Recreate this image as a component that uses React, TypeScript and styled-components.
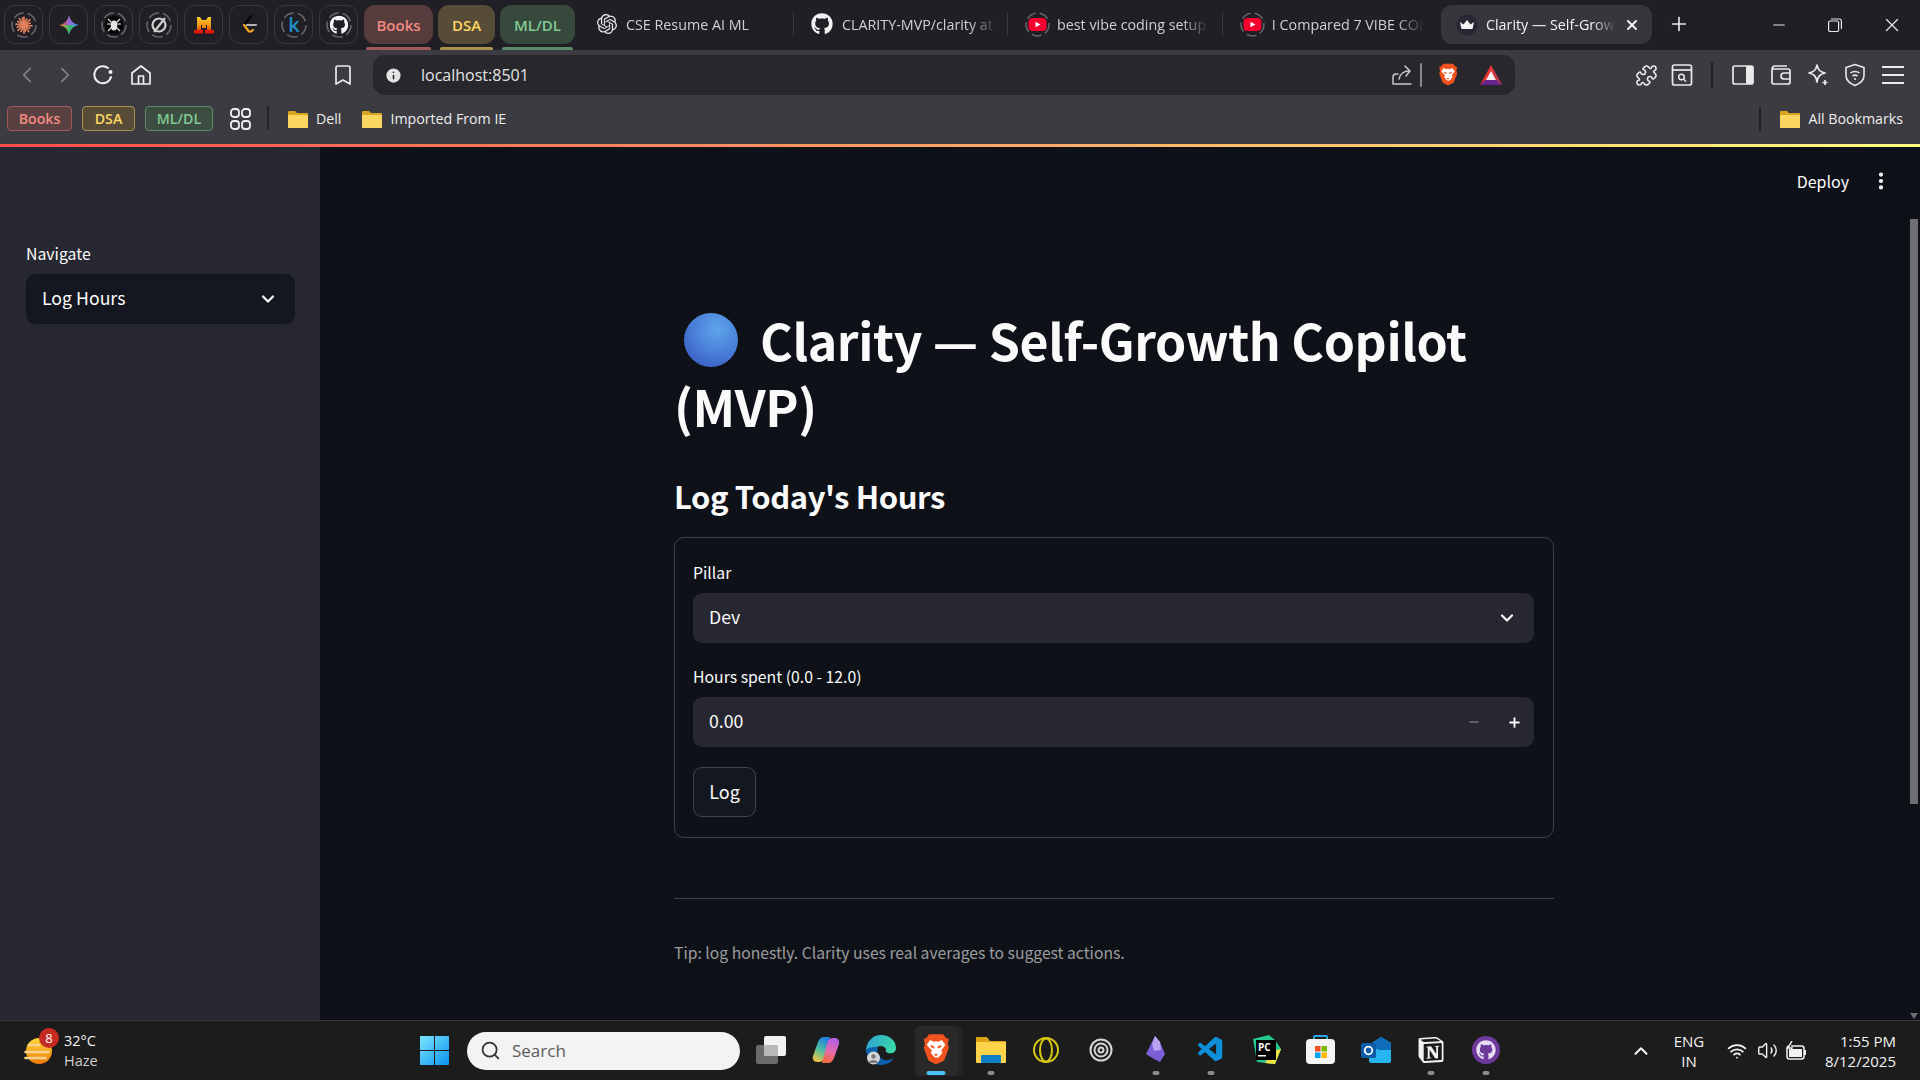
import styled, { createGlobalStyle } from "styled-components";
import { FaGithub } from "react-icons/fa";
import { SiNotion, SiOpenai } from "react-icons/si";
import { VscVscode } from "react-icons/vsc";
import {
  Bookmark,
  ChevronDown,
  ChevronLeft,
  ChevronRight,
  ChevronUp,
  Info,
  Minus,
  MoreVertical,
  Plus,
  Puzzle,
  Search,
  Volume2,
  Wifi,
  X,
} from "lucide-react";
import { ReactNode } from "react";

const GlobalStyle = createGlobalStyle`
  html, body {
    margin: 0;
    padding: 0;
    background: #0e1117;
    overflow: hidden;
  }
  * {
    box-sizing: border-box;
  }
`;

const chromeFont = `"Open Sans", "Noto Sans", sans-serif`;
const appFont = `"Noto Sans CJK SC", "Noto Sans", sans-serif`;

const Screen = styled.div`
  width: 1920px;
  height: 1080px;
  display: flex;
  flex-direction: column;
  overflow: hidden;
  font-family: ${chromeFont};
`;

/* browser tabs */
const TabStrip = styled.div`
  height: 50px;
  flex: none;
  display: flex;
  align-items: flex-start;
  padding: 5px 0 0 4px;
  background: #1f1f25;
  color: #d0d0d2;
`;

const PinnedTab = styled.div`
  width: 39px;
  height: 39px;
  margin-right: 6px;
  display: flex;
  align-items: center;
  justify-content: center;
  border: 1px solid #37373d;
  border-radius: 11px;
`;

const GroupTab = styled.div<{ $w: number; $bg: string; $fg: string; $bar: string }>`
  position: relative;
  width: ${(p) => p.$w}px;
  height: 39px;
  margin-right: 5px;
  display: flex;
  align-items: center;
  justify-content: center;
  border-radius: 11px;
  background: ${(p) => p.$bg};
  color: ${(p) => p.$fg};
  font-size: 15px;
  font-weight: 600;
  &::after {
    content: "";
    position: absolute;
    left: 2px;
    right: 2px;
    bottom: -6px;
    height: 3px;
    border-radius: 2px 2px 0 0;
    background: ${(p) => p.$bar};
  }
`;

const Tab = styled.div<{ $w: number; $gap?: number; $divider?: boolean }>`
  width: ${(p) => p.$w}px;
  height: 24px;
  margin-top: 7px;
  flex: none;
  display: flex;
  align-items: center;
  gap: ${(p) => p.$gap ?? 9}px;
  padding-left: 17px;
  border-right: ${(p) => (p.$divider ? "1px solid #3a3a40" : "none")};
`;

const TabTitle = styled.span<{ $w: number }>`
  width: ${(p) => p.$w}px;
  font-size: 14.3px;
  white-space: nowrap;
  overflow: hidden;
  -webkit-mask-image: linear-gradient(to right, #000 82%, transparent);
  mask-image: linear-gradient(to right, #000 82%, transparent);
`;

const ActiveTab = styled.div`
  width: 211px;
  height: 39px;
  margin-left: 17px;
  flex: none;
  display: flex;
  align-items: center;
  gap: 8px;
  padding-left: 15px;
  border-radius: 11px;
  background: #36363c;
  color: #f2f2f2;
`;

const WindowButtons = styled.div`
  margin-left: auto;
  height: 39px;
  display: flex;
  align-items: center;
  color: #e8e8e8;
`;

const WindowButton = styled.div<{ $w?: number }>`
  width: ${(p) => p.$w ?? 56}px;
  display: flex;
  justify-content: center;
`;

const NewTab = styled(WindowButton)`
  margin-top: 8px;
`;

/* toolbar */
const Toolbar = styled.div`
  height: 45px;
  flex: none;
  display: flex;
  align-items: flex-start;
  padding: 5px 0 0 8px;
  background: #3b3b41;
  color: #eaeaea;
`;

const ToolSlot = styled.div<{ $w?: number; $dim?: boolean; $ml?: number }>`
  width: ${(p) => p.$w ?? 38}px;
  height: 40px;
  margin-left: ${(p) => p.$ml ?? 0}px;
  flex: none;
  display: flex;
  align-items: center;
  justify-content: center;
  color: ${(p) => (p.$dim ? "#8a8a8e" : "inherit")};
`;

const Omnibox = styled.div`
  width: 1142px;
  height: 40px;
  margin-left: 11px;
  flex: none;
  display: flex;
  align-items: center;
  padding-left: 11px;
  border-radius: 12px;
  background: #27272c;
`;

const Url = styled.span`
  margin-left: 18px;
  font-size: 16px;
  color: #e4e4e4;
`;

const OmniEnd = styled.div`
  margin-left: auto;
  display: flex;
  align-items: center;
  color: #c9c9c9;
`;

const BarDivider = styled.div<{ $h?: number; $color?: string; $mr?: number }>`
  width: 2px;
  height: ${(p) => p.$h ?? 24}px;
  margin-right: ${(p) => p.$mr ?? 0}px;
  flex: none;
  border-radius: 1px;
  background: ${(p) => p.$color ?? "#222227"};
`;

/* bookmarks */
const BookmarkBar = styled.div`
  height: 49px;
  flex: none;
  display: flex;
  align-items: flex-start;
  padding: 11px 17px 0 7px;
  background: #3b3b41;
  color: #eeeeee;
  font-size: 14.2px;
`;

const Chip = styled.div<{ $w: number; $bg: string; $fg: string; $line: string }>`
  width: ${(p) => p.$w}px;
  height: 25px;
  margin-right: 10px;
  flex: none;
  display: flex;
  align-items: center;
  justify-content: center;
  border: 1px solid ${(p) => p.$line};
  border-radius: 4px;
  background: ${(p) => p.$bg};
  color: ${(p) => p.$fg};
  font-weight: 600;
`;

const BookmarkItem = styled.div<{ $gap?: number }>`
  height: 25px;
  display: flex;
  align-items: center;
  gap: 8px;
  margin-left: ${(p) => p.$gap ?? 0}px;
  white-space: nowrap;
`;

const BookmarkEnd = styled(BookmarkItem)`
  margin-left: auto;
`;

const GridSlot = styled.div`
  width: 34px;
  height: 25px;
  display: flex;
  align-items: center;
  justify-content: center;
  margin-right: 10px;
`;

const GradientLine = styled.div`
  height: 3px;
  flex: none;
  background: linear-gradient(to right, #ff4b4b, #fffd80);
`;

/* streamlit page */
const Page = styled.div`
  flex: 1;
  min-height: 0;
  display: flex;
  background: #0e1117;
  color: #fafafa;
  font-family: ${appFont};
`;

const Sidebar = styled.aside`
  width: 320px;
  flex: none;
  padding: 96px 25px 0 26px;
  background: #262730;
`;

const FieldLabel = styled.div`
  height: 22px;
  line-height: 22px;
  margin-bottom: 9px;
  font-size: 15.8px;
`;

const SelectBox = styled.div<{ $bg: string }>`
  height: 50px;
  display: flex;
  align-items: center;
  justify-content: space-between;
  padding: 0 17px 4px 16px;
  border-radius: 9px;
  background: ${(p) => p.$bg};
  font-size: 17.7px;
  svg {
    margin-top: 4px;
  }
`;

const Main = styled.main`
  position: relative;
  flex: 1;
  min-width: 0;
`;

const Header = styled.div`
  position: absolute;
  top: 22px;
  right: 28px;
  display: flex;
  align-items: center;
  gap: 21px;
  font-size: 16px;
`;

const Scrollbar = styled.div`
  position: absolute;
  top: 72px;
  right: 2px;
  width: 8px;
  height: 585px;
  background: #6f6f72;
`;

const ScrollArrow = styled.div`
  position: absolute;
  bottom: 1px;
  right: 2px;
  width: 0;
  height: 0;
  border-left: 4px solid transparent;
  border-right: 4px solid transparent;
  border-top: 6px solid #6f6f72;
`;

const Content = styled.div`
  width: 880px;
  margin-left: 354px;
  padding-top: 159px;
`;

const Title = styled.h1`
  margin: 0;
  font-size: 50px;
  line-height: 66px;
  letter-spacing: -0.42px;
  font-weight: 700;
`;

const Orb = styled.span`
  display: inline-block;
  width: 54px;
  height: 54px;
  margin: 0 22px 0 10px;
  vertical-align: -6px;
  border-radius: 50%;
  background: radial-gradient(circle at 62% 30%, #5fa5ea 0%, #4a82d9 45%, #3d63c9 78%, #5a57c4 100%);
`;

const Subtitle = styled.h2`
  margin: 36px 0 0;
  font-size: 31px;
  line-height: 44px;
  letter-spacing: -0.4px;
  font-weight: 600;
`;

const FormCard = styled.form`
  height: 301px;
  margin-top: 19px;
  padding: 24px 19px 0 18px;
  border: 1px solid rgba(250, 250, 250, 0.2);
  border-radius: 10px;
`;

const NumberBox = styled(SelectBox)`
  padding-right: 0;
`;

const Stepper = styled.div`
  display: flex;
  align-items: center;
`;

const StepSlot = styled.div<{ $dim?: boolean }>`
  width: 40px;
  display: flex;
  justify-content: center;
  color: ${(p) => (p.$dim ? "#6f7078" : "#fafafa")};
`;

const Field = styled.div<{ $mb?: number }>`
  margin-bottom: ${(p) => p.$mb ?? 24}px;
`;

const SubmitButton = styled.button`
  width: 63px;
  height: 50px;
  padding: 0 0 3px;
  border: 1px solid rgba(250, 250, 250, 0.2);
  border-radius: 9px;
  background: #13171f;
  color: #fafafa;
  font-family: inherit;
  font-size: 18px;
`;

const Rule = styled.hr`
  height: 1px;
  margin: 60px 0 0;
  border: 0;
  background: rgba(250, 250, 250, 0.2);
`;

const Tip = styled.p`
  margin: 42px 0 0;
  font-size: 15.7px;
  line-height: 24px;
  color: rgba(250, 250, 250, 0.6);
`;

/* windows taskbar */
const Taskbar = styled.footer`
  position: relative;
  height: 60px;
  flex: none;
  display: flex;
  align-items: center;
  border-top: 1px solid #3a3a3a;
  background: #1c1c1c;
  color: #f2f2f2;
  font-family: ${chromeFont};
`;

const Weather = styled.div`
  position: relative;
  width: 420px;
  height: 100%;
  flex: none;
  display: flex;
  align-items: center;
  gap: 12px;
  padding-left: 24px;
`;

const WeatherBadge = styled.span`
  position: absolute;
  left: 39px;
  top: 7px;
  width: 20px;
  height: 20px;
  display: flex;
  align-items: center;
  justify-content: center;
  border-radius: 50%;
  background: #c42b22;
  color: #fff;
  font-size: 13px;
`;

const WeatherText = styled.div`
  font-size: 14.5px;
  line-height: 20px;
  div + div {
    color: #cfcfcf;
  }
`;

const SearchPill = styled.div`
  width: 273px;
  height: 38px;
  margin-left: 18px;
  flex: none;
  display: flex;
  align-items: center;
  gap: 11px;
  padding-left: 13px;
  border-radius: 19px;
  background: #f3f3f3;
  color: #5c5c5c;
  font-size: 17px;
`;

const AppIcons = styled.div`
  margin-left: 3px;
  display: flex;
`;

const AppSlot = styled.div<{ $dot?: boolean; $active?: boolean }>`
  position: relative;
  width: 55px;
  height: 50px;
  display: flex;
  align-items: center;
  justify-content: center;
  &::before {
    content: ${(p) => (p.$active ? '""' : "none")};
    position: absolute;
    inset: 0 5px 0 7px;
    border-radius: 5px;
    background: #292929;
    box-shadow: 5px 0 0 #242424;
  }
  &::after {
    content: ${(p) => (p.$dot || p.$active ? '""' : "none")};
    position: absolute;
    bottom: 1px;
    left: 50%;
    width: ${(p) => (p.$active ? 19 : 7)}px;
    height: 4px;
    transform: translateX(-50%);
    border-radius: 2px;
    background: ${(p) => (p.$active ? "#4cc2ff" : "#8c8c8c")};
  }
  > * {
    position: relative;
    margin-bottom: 2px;
  }
`;

const Tray = styled.div`
  margin-left: auto;
  display: flex;
  align-items: center;
  padding-right: 24px;
  font-size: 15px;
  line-height: 20px;
`;

const TraySlot = styled.div<{ $w: number }>`
  width: ${(p) => p.$w}px;
  display: flex;
  justify-content: center;
  text-align: center;
`;

const Clock = styled.div`
  width: 76px;
  margin-left: 8px;
  text-align: right;
  white-space: nowrap;
`;

/* drawn icons */
const Ring = ({ children }: { children: ReactNode }) => (
  <svg width="26" height="26" viewBox="0 0 26 26">
    <circle cx="13" cy="13" r="12" fill="none" stroke="#66666a" strokeWidth="1.6" strokeDasharray="11 4" />
    {children}
  </svg>
);

const Burst = () => (
  <Ring>
    <g stroke="#e0805c" strokeWidth="1.7" strokeLinecap="round">
      {[0, 24, 48, 72, 96, 120, 144, 168].map((a, i) => (
        <line key={a} x1="13" y1={i % 2 ? 6.5 : 5} x2="13" y2={i % 2 ? 20 : 21} transform={`rotate(${a} 13 13)`} />
      ))}
    </g>
  </Ring>
);

const GeminiStar = () => (
  <svg width="20" height="20" viewBox="0 0 20 20">
    <defs>
      <clipPath id="gemClip">
        <path d="M10 0c1 5 4 9 10 10-6 1-9 5-10 10-1-5-4-9-10-10 6-1 9-5 10-10z" />
      </clipPath>
      <linearGradient id="gemTop" x1="0" y1="0" x2="1" y2="0">
        <stop offset="0" stopColor="#e8453a" />
        <stop offset="0.5" stopColor="#9a6ad0" />
        <stop offset="1" stopColor="#3f8af2" />
      </linearGradient>
      <linearGradient id="gemBottom" x1="0" y1="0" x2="1" y2="0">
        <stop offset="0" stopColor="#f6a51c" />
        <stop offset="0.5" stopColor="#3fb56a" />
        <stop offset="1" stopColor="#2f9be0" />
      </linearGradient>
    </defs>
    <g clipPath="url(#gemClip)">
      <rect width="20" height="10" fill="url(#gemTop)" />
      <rect y="10" width="20" height="10" fill="url(#gemBottom)" />
    </g>
  </svg>
);

const BugIcon = () => (
  <Ring>
    <circle cx="13" cy="13" r="9.5" fill="#060606" />
    <g stroke="#e4e4e4" strokeWidth="1.2" fill="none">
      <ellipse cx="13" cy="13.5" rx="2.6" ry="4.5" fill="#e4e4e4" />
      <path d="M7 7l3.500 3.500M19 7l-3.500 3.500M6 12h4.500M20 12h-4.500M7 19l3.500-3.500M19 19l-3.500-3.500" />
    </g>
  </Ring>
);

const SlashIcon = () => (
  <Ring>
    <circle cx="13" cy="13" r="6.5" fill="none" stroke="#cfcfcf" strokeWidth="2.2" />
    <line x1="8" y1="20" x2="19" y2="6" stroke="#cfcfcf" strokeWidth="2.2" />
  </Ring>
);

const MistralIcon = () => (
  <svg width="20" height="18" viewBox="0 0 20 18">
    <defs>
      <linearGradient id="mist" x1="0" y1="0" x2="0" y2="1">
        <stop offset="0" stopColor="#f8d12c" />
        <stop offset="0.7" stopColor="#f28a12" />
        <stop offset="1" stopColor="#e8500a" />
      </linearGradient>
    </defs>
    <path d="M3 1h3l2 3h4l2-3h3v13h-4v-5h-1v3H8V9H7v5H3z" fill="url(#mist)" />
    <rect x="0" y="14" width="9" height="3.500" fill="#e3170a" />
    <rect x="11" y="14" width="9" height="3.500" fill="#e3170a" />
  </svg>
);

const LeetIcon = () => (
  <svg width="26" height="26" viewBox="0 0 26 26" fill="none" strokeWidth="2.2" strokeLinecap="round">
    <path d="M15 4L8 13" stroke="#050505" />
    <path d="M8 13l4.500 6c1.500 1 3 .5 4.500-1" stroke="#f0a51c" />
    <path d="M11 13h9" stroke="#b4b4b4" />
  </svg>
);

const KIcon = () => (
  <Ring>
    <text x="13" y="20" textAnchor="middle" fontSize="20" fontWeight="600" fill="#1f8fc8" fontFamily="Open Sans, sans-serif">
      k
    </text>
  </Ring>
);

const GitHubRing = () => (
  <Ring>
    <g transform="translate(3.5 3.5)">
      <FaGithub size={19} color="#f4f4f4" />
    </g>
  </Ring>
);

const YouTubeRing = () => (
  <svg width="25" height="25" viewBox="0 0 25 25">
    <circle cx="12.500" cy="12.500" r="11.500" fill="none" stroke="#66666a" strokeWidth="1.500" strokeDasharray="10 4" />
    <rect x="3.500" y="6" width="18" height="13" rx="4" fill="#f5002f" />
    <path d="M10.500 9.800l5 2.700-5 2.700z" fill="#fff" />
  </svg>
);

const CrownIcon = () => (
  <svg width="22" height="22" viewBox="0 0 22 22">
    <circle cx="11" cy="11" r="10.5" fill="#262733" />
    <path d="M4 8l3.500 2.500L11 6l3.500 4.500L18 8l-1.500 7h-11z" fill="#f3f3f3" />
  </svg>
);

const ReloadIcon = () => (
  <svg width="24" height="24" viewBox="0 0 24 24" fill="none" stroke="#f0f0f0" strokeWidth="2">
    <path d="M20 14a8.500 8.500 0 1 1-3-9" strokeLinecap="round" />
    <circle cx="19.500" cy="9" r="2" fill="#f0f0f0" stroke="none" />
  </svg>
);

const HomeIcon = () => (
  <svg width="22" height="24" viewBox="0 0 22 24" fill="none" stroke="#f0f0f0" strokeWidth="1.700" strokeLinejoin="round">
    <path d="M2 10l9-7 9 7v11H2z" />
    <path d="M8.500 21v-8h5v8" />
  </svg>
);

const ShareIcon = () => (
  <svg width="22" height="22" viewBox="0 0 22 22" fill="none" stroke="#c9c9c9" strokeWidth="1.500" strokeLinejoin="round" strokeLinecap="round">
    <path d="M1 20V13a3 3 0 0 1 3-3h2M19 20H1M7 15c1-5 5-8 10-8M13 2l5 5-4 5" />
  </svg>
);

const BraveLion = ({ size }: { size: number }) => (
  <svg width={size} height={size * 1.17} viewBox="0 0 24 28">
    <path d="M6 1h12l2.500 3 2.500 1-1 4.500 1 3-4 11L12 27l-6.500-3.500-4-11 1-3L1.500 5 4 4z" fill="#f1531f" />
    <path d="M7 6l3 1.500 2-.5 2 .5 3-1.500 3 4-3.500 5 1 2-3.500 4h-3l-3.500-4 1-2L4 10z" fill="#fff" />
    <path d="M7.500 11l3 1.500M16.500 11l-3 1.500" stroke="#f1531f" strokeWidth="1.500" />
    <path d="M10 18h4l-2 1.800z" fill="#f1531f" />
  </svg>
);

const BatTriangle = () => (
  <svg width="24" height="22" viewBox="0 0 24 22">
    <path d="M12 1L1 21h22z" fill="#e5352e" />
    <path d="M1 21h22l-5-5H6z" fill="#66248c" />
    <path d="M12 7l-5 9h10z" fill="#f4f0f4" />
    <path d="M12 1l5 15 6 5z" fill="#b03a5b" opacity="0.6" />
  </svg>
);

const ReaderIcon = () => (
  <svg width="22" height="24" viewBox="0 0 22 24" fill="none" stroke="#eaeaea" strokeWidth="1.700">
    <rect x="1.500" y="2" width="19" height="20" rx="2" />
    <path d="M1.500 7h19" />
    <circle cx="10.500" cy="14" r="2.800" strokeWidth="1.500" />
    <path d="M12.500 16l2.500 2.500" strokeWidth="1.500" />
  </svg>
);

const SidePanelIcon = () => (
  <svg width="22" height="22" viewBox="0 0 22 22">
    <rect x="1" y="2" width="20" height="18" rx="2" fill="none" stroke="#eaeaea" strokeWidth="1.700" />
    <rect x="14" y="2" width="7" height="18" rx="1.500" fill="#eaeaea" />
  </svg>
);

const WalletIcon = () => (
  <svg width="22" height="22" viewBox="0 0 22 22" fill="none" stroke="#eaeaea" strokeWidth="1.700">
    <path d="M3 5h15a2 2 0 0 1 2 2v11a2 2 0 0 1-2 2H4a2 2 0 0 1-2-2V6c0-2 1-4 3-4h12" />
    <path d="M20 9h-6a2.500 2.500 0 0 0 0 6h6" />
  </svg>
);

const LeoIcon = () => (
  <svg width="24" height="24" viewBox="0 0 24 24" fill="none" stroke="#eaeaea" strokeWidth="1.700" strokeLinejoin="round">
    <path d="M11 2c1 5 3 7 8 8-5 1-7 3-8 9-1-6-3-8-8-9 5-1 7-3 8-8z" />
    <path d="M19 17v5M16.500 19.500h5" />
  </svg>
);

const VpnIcon = () => (
  <svg width="22" height="24" viewBox="0 0 22 24" fill="none" stroke="#eaeaea" strokeWidth="1.600">
    <path d="M11 1.500l9 3v8c0 5-4 8-9 10-5-2-9-5-9-10v-8z" />
    <path d="M6.500 10c2.500-2 6.500-2 9 0M8.500 13c1.500-1 3.500-1 5 0" />
    <circle cx="11" cy="16" r="1" fill="#eaeaea" stroke="none" />
  </svg>
);

const MenuIcon = () => (
  <svg width="22" height="20" viewBox="0 0 22 20" stroke="#eaeaea" strokeWidth="1.800">
    <path d="M0 2h22M0 10h22M0 18h22" />
  </svg>
);

const AppsGrid = () => (
  <svg width="21" height="22" viewBox="0 0 21 22" fill="none" stroke="#f0f0f0" strokeWidth="1.800">
    <rect x="1" y="1" width="8" height="8" rx="3" />
    <rect x="12" y="1" width="8" height="8" rx="3" />
    <rect x="1" y="13" width="8" height="8" rx="3" />
    <rect x="12" y="13" width="8" height="8" rx="3" />
  </svg>
);

const Folder = ({ size = 20 }: { size?: number }) => (
  <svg width={size} height={size * 0.9} viewBox="0 0 20 18">
    <path d="M0 2a1 1 0 0 1 1-1h6l2 2h10a1 1 0 0 1 1 1v13a1 1 0 0 1-1 1H1a1 1 0 0 1-1-1z" fill="#d9a520" />
    <path d="M0 5h20v12a1 1 0 0 1-1 1H1a1 1 0 0 1-1-1z" fill="#fad660" />
  </svg>
);

const HazeSun = () => (
  <svg width="28" height="28" viewBox="0 0 28 28">
    <defs>
      <linearGradient id="sun" x1="0" y1="0" x2="0" y2="1">
        <stop offset="0" stopColor="#fdd835" />
        <stop offset="1" stopColor="#ee7a0c" />
      </linearGradient>
    </defs>
    <circle cx="15" cy="14" r="13" fill="url(#sun)" />
    <g stroke="#f5d38a" strokeWidth="2.600" strokeLinecap="round">
      <path d="M5 8h10M1.500 15h23M1.500 21h20" />
    </g>
  </svg>
);

const WindowsLogo = () => (
  <svg width="29" height="29" viewBox="0 0 29 29">
    <defs>
      <linearGradient id="win" x1="0" y1="0" x2="1" y2="1">
        <stop offset="0" stopColor="#7be6ff" />
        <stop offset="1" stopColor="#0a92f0" />
      </linearGradient>
    </defs>
    <path d="M0 1a1 1 0 0 1 1-1h13v14H0zM15 0h13a1 1 0 0 1 1 1v13H15zM0 15h14v14H1a1 1 0 0 1-1-1zM15 15h14v13a1 1 0 0 1-1 1H15z" fill="url(#win)" />
  </svg>
);

const TaskViewIcon = () => (
  <svg width="30" height="28" viewBox="0 0 30 28">
    <rect x="0" y="9" width="22" height="19" rx="2" fill="#6a6a6a" />
    <rect x="8" y="0" width="22" height="20" rx="2" fill="#f2f2f2" />
    <rect x="8" y="9" width="14" height="11" rx="1" fill="#b8b8b8" />
  </svg>
);

const CopilotIcon = () => (
  <svg width="28" height="26" viewBox="0 0 28 26">
    <defs>
      <linearGradient id="copA" x1="0.600" y1="0" x2="0.200" y2="1">
        <stop offset="0" stopColor="#1f7fe0" />
        <stop offset="0.5" stopColor="#4fc0a0" />
        <stop offset="1" stopColor="#f7c33c" />
      </linearGradient>
      <linearGradient id="copB" x1="0.600" y1="0" x2="0.400" y2="1">
        <stop offset="0" stopColor="#b060e8" />
        <stop offset="0.55" stopColor="#e86aa8" />
        <stop offset="1" stopColor="#f26a3c" />
      </linearGradient>
    </defs>
    <path d="M12 0h6l-5 19c-.700 3-2 6-6 6H5C2 25 0 22 1 19L6 5C7 2 9 0 12 0z" fill="url(#copA)" />
    <path d="M16 26h-6l5-19c.700-3 2-6 6-6h2c3 0 5 3 4 6l-5 14c-1 3-3 5-6 5z" fill="url(#copB)" />
  </svg>
);

const EdgeIcon = () => (
  <svg width="30" height="30" viewBox="0 0 30 30">
    <defs>
      <linearGradient id="edge" x1="0" y1="0" x2="1" y2="0.300">
        <stop offset="0" stopColor="#2f9fd8" />
        <stop offset="1" stopColor="#38d6a8" />
      </linearGradient>
    </defs>
    <path d="M15 0c9 0 15 6 15 13 0 5-5 6-8 5-2-1-3-2-2-4-2-4-9-4-12 0-1 1-3 2-4 3-2 2-3 0-4 0C0 6 7 0 15 0z" fill="url(#edge)" />
    <path d="M0 15c1 8 7 15 15 15 7 0 11-4 13-7-5 3-11 3-14-1-3-3-3-7-2-10-5 0-9 0-12 3z" fill="#0c62ad" />
    <circle cx="7.500" cy="23" r="6.500" fill="#d4d4d4" />
    <circle cx="7.500" cy="21.500" r="2.200" fill="#7a7a7a" />
    <path d="M3 28c0-4 9-4 9 0z" fill="#7a7a7a" />
  </svg>
);

const FilesIcon = () => (
  <svg width="30" height="27" viewBox="0 0 30 27">
    <path d="M0 2a1 1 0 0 1 1-1h10l3 4h15a1 1 0 0 1 1 1v5H0z" fill="#dca214" />
    <path d="M0 6h30v20a1 1 0 0 1-1 1H1a1 1 0 0 1-1-1z" fill="#fdd34c" />
    <rect x="5" y="19" width="20" height="8" rx="1" fill="#0f7fc8" />
  </svg>
);

const OperaIcon = () => (
  <svg width="26" height="26" viewBox="0 0 26 26" fill="none" stroke="#d9c813" strokeWidth="2">
    <circle cx="13" cy="13" r="12" />
    <ellipse cx="13" cy="13" rx="6" ry="11.500" />
  </svg>
);

const OllamaRings = () => (
  <svg width="24" height="24" viewBox="0 0 24 24" fill="none" stroke="#d4d4d4" strokeWidth="2">
    <circle cx="12" cy="12" r="10.500" />
    <circle cx="12" cy="12" r="6.500" />
    <circle cx="12" cy="12" r="2.500" />
  </svg>
);

const ObsidianIcon = () => (
  <svg width="21" height="27" viewBox="0 0 21 27">
    <path d="M10 0l5 6 5 12-5 8-6-3-8-5 4-8z" fill="#7c5fd6" />
    <path d="M10 0l5 6 1 8-7 1-2-7z" fill="#b9a4f0" />
  </svg>
);

const PyCharmIcon = () => (
  <svg width="30" height="29" viewBox="0 0 30 29">
    <path d="M2 4l16-4 6 5 6 9-6 15-18-2z" fill="#25c98c" />
    <path d="M22 16l8-2-6 15-10-1z" fill="#f5e23c" />
    <rect x="5" y="5" width="20" height="20" fill="#000" />
    <text x="7" y="16" fontSize="10" fontWeight="700" fill="#fff" fontFamily="Open Sans, sans-serif">
      PC
    </text>
    <rect x="7" y="20" width="8" height="1.500" fill="#fff" />
  </svg>
);

const StoreIcon = () => (
  <svg width="29" height="29" viewBox="0 0 29 29">
    <path d="M8 5V2a1 1 0 0 1 1-1h11a1 1 0 0 1 1 1v3" fill="none" stroke="#2aa5e8" strokeWidth="2" />
    <rect x="0" y="4" width="29" height="25" rx="4" fill="#f4f4f4" />
    <rect x="9" y="11" width="5.500" height="5.500" fill="#f25022" />
    <rect x="15.500" y="11" width="5.500" height="5.500" fill="#7fba00" />
    <rect x="9" y="17.500" width="5.500" height="5.500" fill="#00a4ef" />
    <rect x="15.500" y="17.500" width="5.500" height="5.500" fill="#ffb900" />
  </svg>
);

const OutlookIcon = () => (
  <svg width="30" height="26" viewBox="0 0 30 26">
    <path d="M8 8L20 0l10 6v18a2 2 0 0 1-2 2H10a2 2 0 0 1-2-2z" fill="#25b4ee" />
    <path d="M20 0l10 6v7H18L8 8z" fill="#0f6cbd" />
    <rect x="0" y="6" width="15" height="15" rx="1.500" fill="#0a5ca8" />
    <circle cx="7.500" cy="13.500" r="3.800" fill="none" stroke="#fff" strokeWidth="1.800" />
  </svg>
);

const GithubDesktop = () => (
  <svg width="28" height="28" viewBox="0 0 28 28">
    <circle cx="14" cy="14" r="14" fill="#6d3a9c" />
    <g transform="translate(4 4)">
      <FaGithub size={20} color="#e8dcf2" />
    </g>
  </svg>
);

const BatteryIcon = () => (
  <svg width="22" height="20" viewBox="0 0 22 20" fill="none" stroke="#f2f2f2" strokeWidth="1.500">
    <rect x="1" y="5" width="17" height="13" rx="2.500" />
    <rect x="3" y="8" width="13" height="8" fill="#f2f2f2" stroke="none" />
    <path d="M19 9v5" strokeWidth="2" />
    <path d="M6 0L2 7h4L4 12" fill="#1c1c1c" />
  </svg>
);

const App = () => {
  return (
    <Screen>
      <GlobalStyle />
      <TabStrip>
        <PinnedTab><Burst /></PinnedTab>
        <PinnedTab><GeminiStar /></PinnedTab>
        <PinnedTab><BugIcon /></PinnedTab>
        <PinnedTab><SlashIcon /></PinnedTab>
        <PinnedTab><MistralIcon /></PinnedTab>
        <PinnedTab><LeetIcon /></PinnedTab>
        <PinnedTab><KIcon /></PinnedTab>
        <PinnedTab><GitHubRing /></PinnedTab>
        <GroupTab $w={69} $bg="#563c3c" $fg="#f28b82" $bar="#a05a5a">Books</GroupTab>
        <GroupTab $w={57} $bg="#574c37" $fg="#fdd663" $bar="#a8924c">DSA</GroupTab>
        <GroupTab $w={75} $bg="#37493c" $fg="#81c995" $bar="#5a8a68">ML/DL</GroupTab>
        <Tab $w={214} $divider>
          <SiOpenai size={20} color="#e8e8e8" />
          <TabTitle $w={150}>CSE Resume AI ML</TabTitle>
        </Tab>
        <Tab $w={214} $divider>
          <FaGithub size={22} color="#f2f2f2" />
          <TabTitle $w={155}>CLARITY-MVP/clarity at main</TabTitle>
        </Tab>
        <Tab $w={215} $gap={7} $divider>
          <YouTubeRing />
          <TabTitle $w={152}>best vibe coding setup 2025</TabTitle>
        </Tab>
        <Tab $w={201} $gap={7}>
          <YouTubeRing />
          <TabTitle $w={153}>I Compared 7 VIBE CODING</TabTitle>
        </Tab>
        <ActiveTab>
          <CrownIcon />
          <TabTitle $w={130}>Clarity — Self-Growth Copilot</TabTitle>
          <X size={16} strokeWidth={3} color="#f2f2f2" />
        </ActiveTab>
        <NewTab $w={54}>
          <Plus size={22} strokeWidth={1.8} color="#eaeaea" />
        </NewTab>
        <WindowButtons>
          <WindowButton $w={57}>
            <Minus size={18} strokeWidth={1.5} />
          </WindowButton>
          <WindowButton>
            <svg width="14" height="14" viewBox="0 0 14 14" fill="none" stroke="#e8e8e8" strokeWidth="1.200">
              <rect x="0.600" y="3" width="10" height="10.500" rx="1.500" />
              <path d="M3 1h8.500A2 2 0 0 1 13.400 3v8" />
            </svg>
          </WindowButton>
          <WindowButton $w={57}>
            <X size={22} strokeWidth={1.3} />
          </WindowButton>
        </WindowButtons>
      </TabStrip>

      <Toolbar>
        <ToolSlot $dim><ChevronLeft size={26} strokeWidth={1.5} /></ToolSlot>
        <ToolSlot $dim><ChevronRight size={26} strokeWidth={1.5} /></ToolSlot>
        <ToolSlot><ReloadIcon /></ToolSlot>
        <ToolSlot><HomeIcon /></ToolSlot>
        <ToolSlot $ml={164}><Bookmark size={24} strokeWidth={1.7} /></ToolSlot>
        <Omnibox>
          <Info size={19} fill="#e4e4e4" color="#27272c" strokeWidth={2} />
          <Url>localhost:8501</Url>
          <OmniEnd>
            <ToolSlot $w={35}><ShareIcon /></ToolSlot>
            <BarDivider $color="#8a8a8e" />
            <ToolSlot $w={51}><BraveLion size={20} /></ToolSlot>
            <ToolSlot $w={35}><BatTriangle /></ToolSlot>
            <ToolSlot $w={7} />
          </OmniEnd>
        </Omnibox>
        <ToolSlot $w={36} $ml={113}><Puzzle size={23} strokeWidth={1.6} /></ToolSlot>
        <ToolSlot $w={36}><ReaderIcon /></ToolSlot>
        <ToolSlot $w={24}><BarDivider $h={26} /></ToolSlot>
        <ToolSlot $w={38}><SidePanelIcon /></ToolSlot>
        <ToolSlot $w={37}><WalletIcon /></ToolSlot>
        <ToolSlot $w={37}><LeoIcon /></ToolSlot>
        <ToolSlot $w={38}><VpnIcon /></ToolSlot>
        <ToolSlot $w={37}><MenuIcon /></ToolSlot>
      </Toolbar>

      <BookmarkBar>
        <Chip $w={65} $bg="#5a4141" $fg="#f28b82" $line="#a05a5a">Books</Chip>
        <Chip $w={53} $bg="#574c37" $fg="#fdd663" $line="#a8924c">DSA</Chip>
        <Chip $w={68} $bg="#3c4d41" $fg="#81c995" $line="#5a8a68">ML/DL</Chip>
        <GridSlot><AppsGrid /></GridSlot>
        <BarDivider $h={24} />
        <BookmarkItem $gap={19}>
          <Folder />
          Dell
        </BookmarkItem>
        <BookmarkItem $gap={21}>
          <Folder />
          Imported From IE
        </BookmarkItem>
        <BookmarkEnd>
          <BarDivider $h={24} $mr={11} />
          <Folder />
          All Bookmarks
        </BookmarkEnd>
      </BookmarkBar>
      <GradientLine />

      <Page>
        <Sidebar>
          <FieldLabel>Navigate</FieldLabel>
          <SelectBox $bg="#14171f">
            Log Hours
            <ChevronDown size={20} strokeWidth={2.6} />
          </SelectBox>
        </Sidebar>
        <Main>
          <Header>
            Deploy
            <MoreVertical size={22} strokeWidth={2.6} />
          </Header>
          <Scrollbar />
          <ScrollArrow />
          <Content>
            <Title>
              <Orb />
              Clarity — Self-Growth Copilot (MVP)
            </Title>
            <Subtitle>Log Today's Hours</Subtitle>
            <FormCard>
              <Field $mb={23}>
                <FieldLabel>Pillar</FieldLabel>
                <SelectBox $bg="#262730">
                  Dev
                  <ChevronDown size={20} strokeWidth={2.6} />
                </SelectBox>
              </Field>
              <Field $mb={20}>
                <FieldLabel>Hours spent (0.0 - 12.0)</FieldLabel>
                <NumberBox $bg="#262730">
                  0.00
                  <Stepper>
                    <StepSlot $dim><Minus size={14} strokeWidth={2.5} /></StepSlot>
                    <StepSlot><Plus size={15} strokeWidth={3} /></StepSlot>
                  </Stepper>
                </NumberBox>
              </Field>
              <SubmitButton type="button">Log</SubmitButton>
            </FormCard>
            <Rule />
            <Tip>Tip: log honestly. Clarity uses real averages to suggest actions.</Tip>
          </Content>
        </Main>
      </Page>

      <Taskbar>
        <Weather>
          <HazeSun />
          <WeatherBadge>8</WeatherBadge>
          <WeatherText>
            <div>32°C</div>
            <div>Haze</div>
          </WeatherText>
        </Weather>
        <WindowsLogo />
        <SearchPill>
          <Search size={21} strokeWidth={2} color="#333" />
          Search
        </SearchPill>
        <AppIcons>
          <AppSlot><TaskViewIcon /></AppSlot>
          <AppSlot><CopilotIcon /></AppSlot>
          <AppSlot><EdgeIcon /></AppSlot>
          <AppSlot $active><BraveLion size={28} /></AppSlot>
          <AppSlot $dot><FilesIcon /></AppSlot>
          <AppSlot><OperaIcon /></AppSlot>
          <AppSlot><OllamaRings /></AppSlot>
          <AppSlot $dot><ObsidianIcon /></AppSlot>
          <AppSlot $dot><VscVscode size={30} color="#0e8fdc" /></AppSlot>
          <AppSlot><PyCharmIcon /></AppSlot>
          <AppSlot><StoreIcon /></AppSlot>
          <AppSlot><OutlookIcon /></AppSlot>
          <AppSlot $dot><SiNotion size={26} color="#f2f2f2" /></AppSlot>
          <AppSlot $dot><GithubDesktop /></AppSlot>
        </AppIcons>
        <Tray>
          <TraySlot $w={30}><ChevronUp size={22} strokeWidth={2.2} /></TraySlot>
          <TraySlot $w={66}>
            <div>ENG<br />IN</div>
          </TraySlot>
          <TraySlot $w={30}><Wifi size={20} strokeWidth={2.2} /></TraySlot>
          <TraySlot $w={30}><Volume2 size={21} strokeWidth={1.6} /></TraySlot>
          <TraySlot $w={30}><BatteryIcon /></TraySlot>
          <Clock>1:55 PM<br />8/12/2025</Clock>
        </Tray>
      </Taskbar>
    </Screen>
  );
};

export default App;
